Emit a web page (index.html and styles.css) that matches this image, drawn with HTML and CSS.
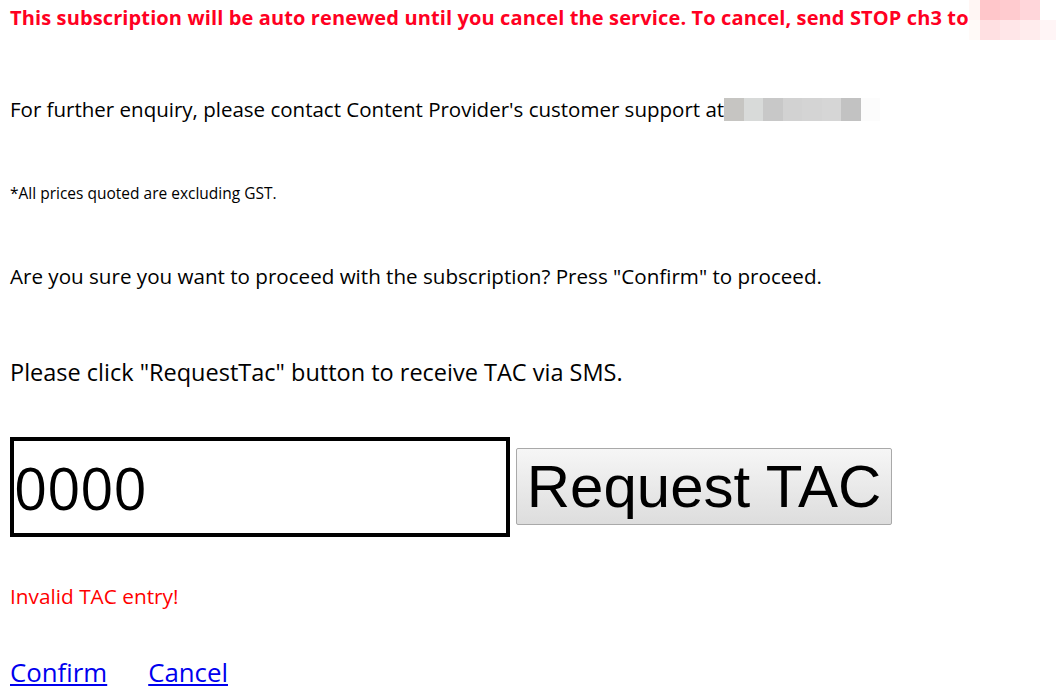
FILE: index.html
```
<!DOCTYPE html>
<html>
<head>
<meta name="viewport" content="width=device-width, initial-scale=1">
<link rel="stylesheet" href="styles.css">
</head>
<body>

<div class="redact redact-top">
  <span style="background:#fff6f4"></span><span style="background:#ffc6ca"></span><span style="background:#ffcbcf"></span><span style="background:#ffd6da"></span><span style="background:#fff"></span>
  <span style="background:#fffaf8"></span><span style="background:#ffe0e2"></span><span style="background:#ffe6e8"></span><span style="background:#ffeced"></span><span style="background:#fff5f6"></span>
</div>

<p class="notice">This subscription will be auto renewed until you cancel the service. To cancel, send STOP ch3 to</p>

<p class="line first">For further enquiry, please contact Content Provider's customer support at<span class="redact-inline"><span style="background:#c6c5c2"></span><span style="background:#d8dad9"></span><span style="background:#c8c8c8"></span><span style="background:#d2d2d2"></span><span style="background:#d4d4d4"></span><span style="background:#d6d6d6"></span><span style="background:#c2c2c2"></span><span style="background:#fcfcfc"></span></span></p>

<p class="small">*All prices quoted are excluding GST.</p>

<p class="line">Are you sure you want to proceed with the subscription? Press "Confirm" to proceed.</p>

<p class="big">Please click "RequestTac" button to receive TAC via SMS.</p>

<div class="tac">
  <input class="tacbox" type="text" value="0000">
  <button class="reqbtn">Request TAC</button>
</div>

<p class="error">Invalid TAC entry!</p>

<div class="actions">
  <a href="#">Confirm</a>
  <a href="#">Cancel</a>
</div>

</body>
</html>
```

FILE: styles.css
```
body {
    margin: 0;
    padding: 0 10px;
    font-family: "Open Sans", "Noto Sans", sans-serif;
    color: #000;
    background: #fff;
    position: relative;
}

p { margin: 0; }

/* red auto renew notice */
.notice {
    color: #ff0022;
    font-weight: bold;
    font-size: 20px;
    line-height: 24px;
    padding-top: 6px;
    letter-spacing: 0.12px;
}

.line {
    font-size: 20.6px;
    line-height: 24px;
    margin-top: 62px;
}

.line.first {
    margin-top: 67px;
    font-size: 20.5px;
}

.small {
    font-size: 15.5px;
    line-height: 18px;
    margin-top: 63px;
}

.big {
    font-size: 23.5px;
    line-height: 30px;
    margin-top: 69px;
}

.tac {
    display: flex;
    align-items: flex-start;
    gap: 6px;
    margin-top: 50px;
}

.tacbox {
    width: 500px;
    height: 100px;
    box-sizing: border-box;
    border: 4px solid #000;
    padding: 0;
    font-family: "Open Sans", "Noto Sans", sans-serif;
    font-size: 58px;
    color: #000;
    outline: none;
}

.reqbtn {
    margin-top: 11px;
    height: 77px;
    width: 376px;
    box-sizing: border-box;
    border: 1px solid #a9a9a9;
    border-radius: 2px;
    background: linear-gradient(#f6f6f6, #dddddd);
    font-family: "Liberation Sans", Arial, sans-serif;
    font-size: 60px;
    padding: 0;
    color: #000;
}

.error {
    color: #ff0000;
    font-size: 20.8px;
    line-height: 24px;
    margin-top: 47px;
}

.actions {
    margin-top: 48px;
    display: flex;
    gap: 41px;
    font-size: 25.8px;
    line-height: 32px;
}

.actions a { color: #0000ee; }

/* pixelated redaction blocks */
.redact {
    position: absolute;
    display: grid;
}

.redact-top {
    top: 0;
    right: 0;
    grid-template-columns: 11px 20px 20px 20px 16px;
    grid-template-rows: 20px 20px;
}

.redact-inline {
    display: inline-flex;
    vertical-align: -4px;
    height: 23px;
}

.redact-inline span {
    width: 19.5px;
    height: 23px;
}
```
